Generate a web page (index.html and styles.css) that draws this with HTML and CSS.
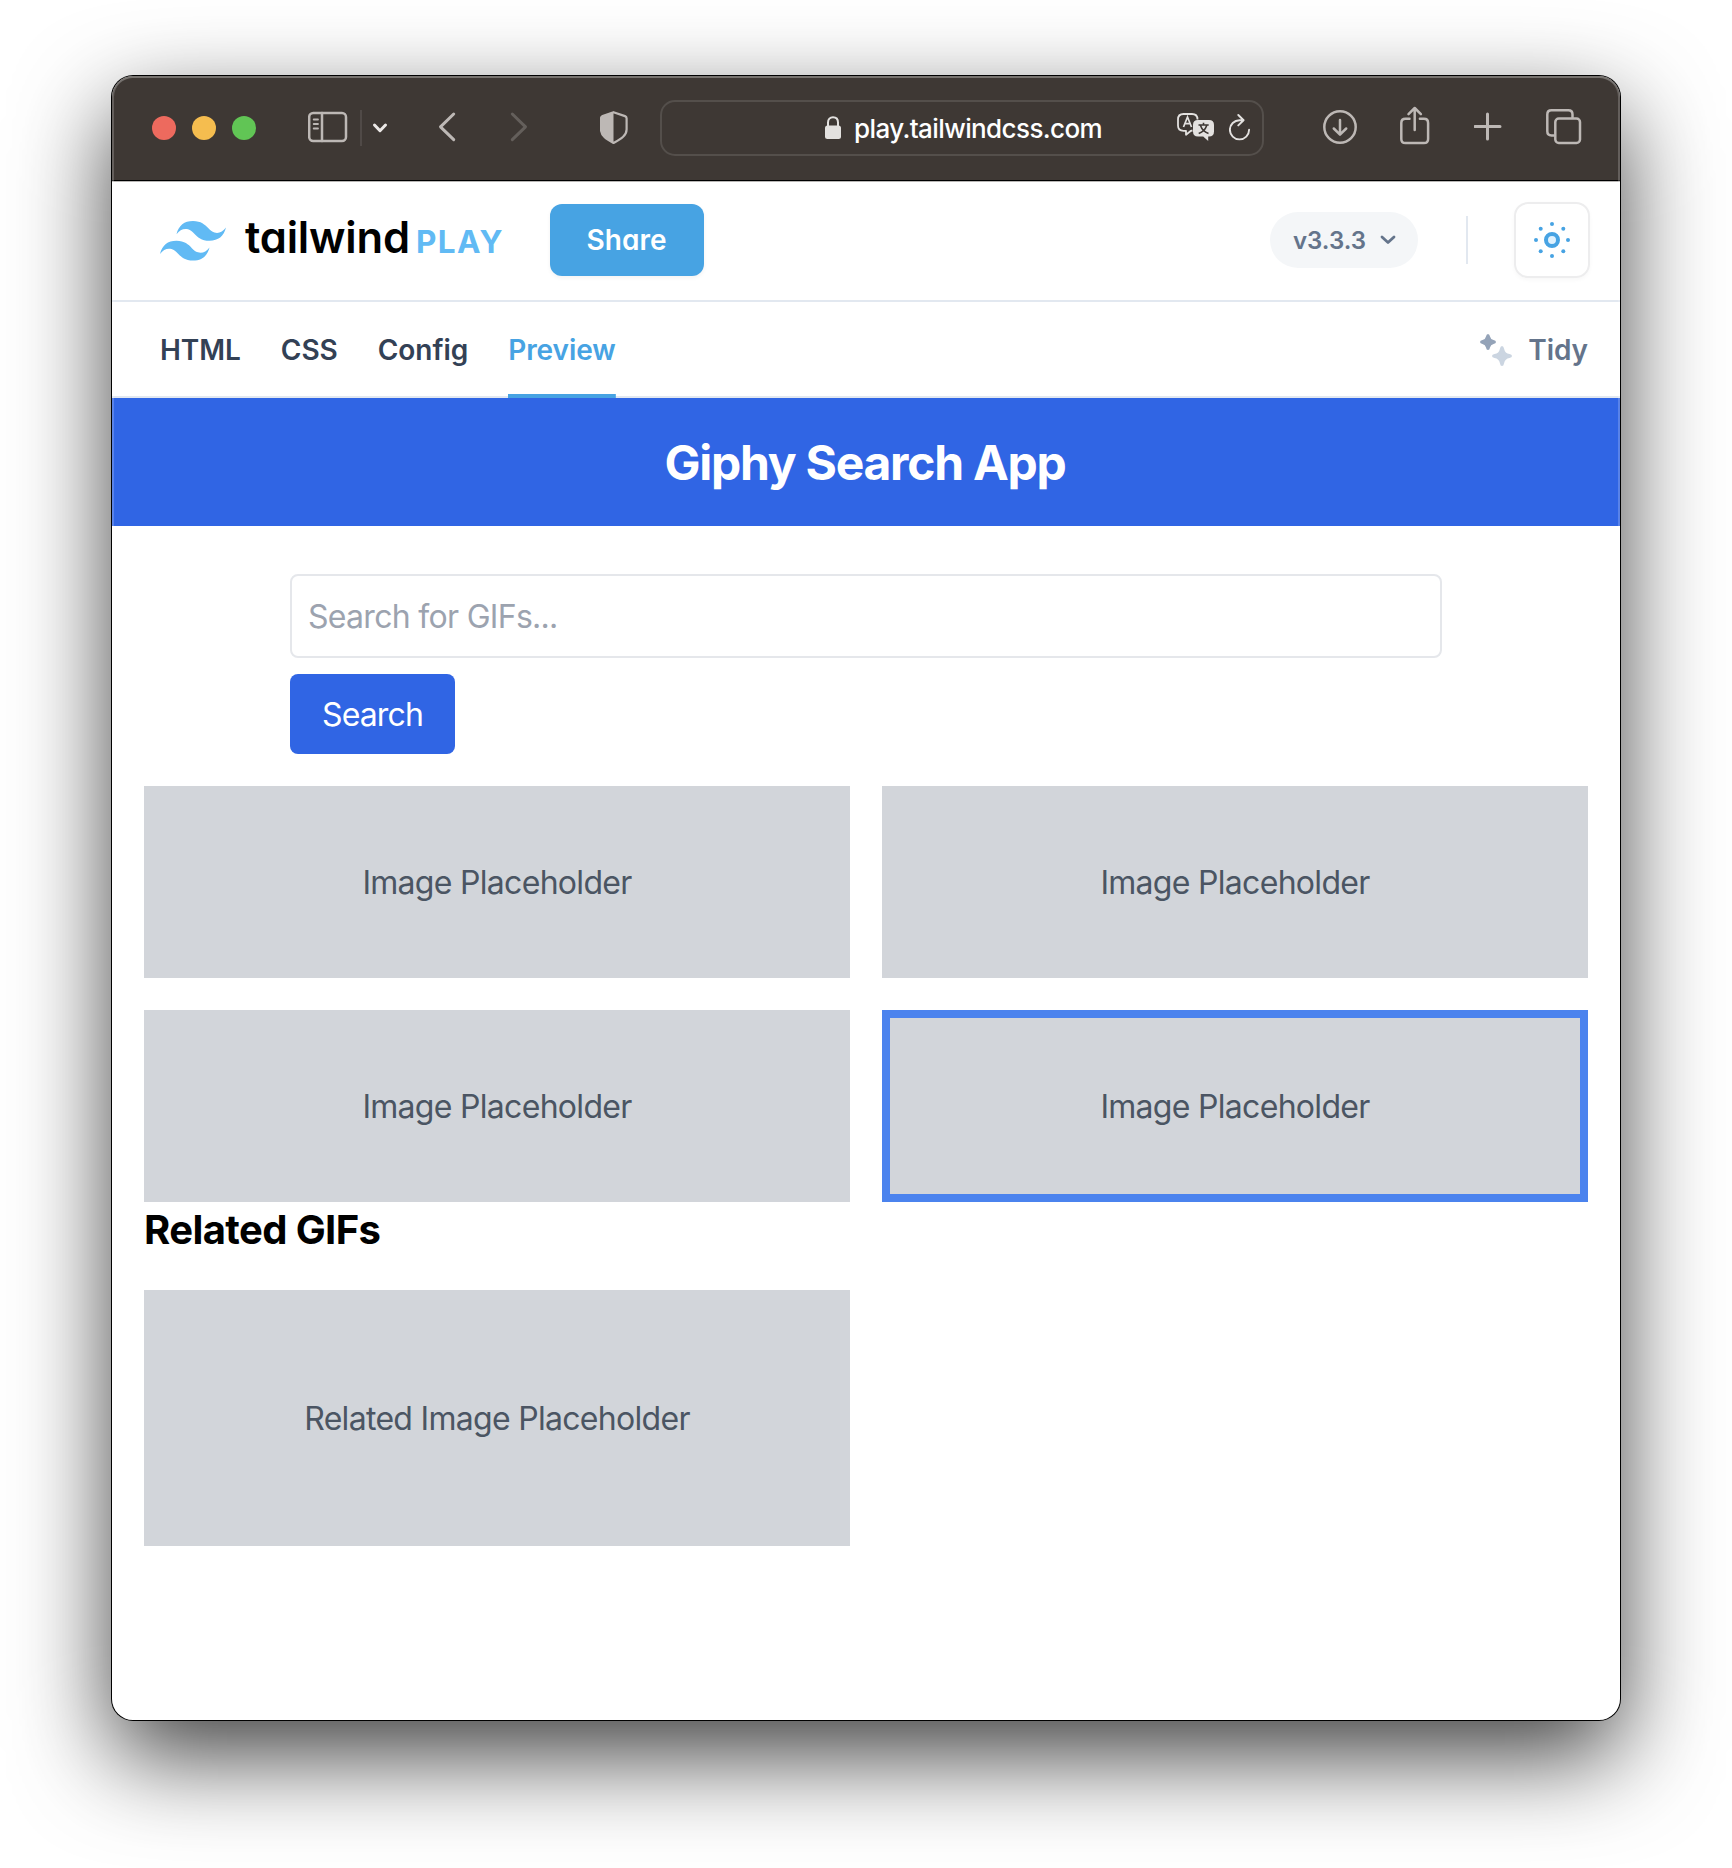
FILE: index.html
```html
<!DOCTYPE html>
<html lang="en">
<head>
<meta charset="utf-8">
<title>Tailwind Play</title>
<link rel="stylesheet" href="styles.css">
</head>
<body>
<div class="window">
  <div class="toolbar">
    <div class="lights"><i class="light red"></i><i class="light yellow"></i><i class="light green"></i></div>
    <svg class="ico sidebar" width="40" height="56" viewBox="308 100 40 56"><rect x="309.2" y="112.9" width="36.8" height="28.2" rx="4"/><path d="M322 113v28"/><path class="thin" d="M313.7 119.5h4.3M313.7 124h4.3M313.7 128.5h4.3"/></svg>
    <span class="split"></span>
    <svg class="ico bright menu" width="16" height="56" viewBox="372 100 16 56"><path d="M374.5 125l5.5 5.700 5.500-5.700"/></svg>
    <svg class="ico back" width="18" height="56" viewBox="438 100 18 56"><path d="M453.700 114l-13.200 12.800 13.200 12.800"/></svg>
    <svg class="ico forward" width="18" height="56" viewBox="510 100 18 56"><path d="M512.300 114l13.200 12.800-13.200 12.800"/></svg>
    <svg class="ico shield" width="28" height="56" viewBox="600 100 28 56"><path d="M613.500 112.200l11.500 3.900q1.600.6 1.600 2.200v11.200c0 6.500-6.500 9.800-13.100 13.500-6.500-3.700-12.500-7-12.500-13.500v-11.200q0-1.600 1.600-2.200z"/><path class="solid" d="M613.500 112.200v30.800c-6.500-3.700-12.500-7-12.500-13.500v-11.200q0-1.600 1.600-2.200z"/></svg>
    <div class="address">
      <svg class="lock" width="16" height="24" viewBox="0 0 16 24"><rect y="9.500" width="16" height="13.500" rx="2.500" fill="#e3e1df"/><path d="M3 10V6.500C3 3.200 5 1.200 8 1.200s5 2 5 5.300V10" fill="none" stroke="#e3e1df" stroke-width="2"/></svg>
      <span class="url">play.tailwindcss.com</span>
      <svg class="translate" width="38" height="28" viewBox="1177 112 38 28"><path d="M1192.500 129.500l-1.500.3-5 4v-4h-2.500q-5.500 0-5.500-5.300v-6q0-5.500 5.500-5.500h8.500q5.500 0 5.500 5.500" fill="none" stroke="#e3e1df" stroke-width="1.800" stroke-linejoin="round"/><path d="M1183.500 126l4-10 4 10M1185 122.700h5" fill="none" stroke="#e3e1df" stroke-width="1.700"/><path d="M1198 119h11q5 0 5 5v6.500q0 5-5 5h-.8v4.500l-5-4.500h-5.200q-5 0-5-5v-6.500q0-5 5-5z" fill="#e3e1df"/><path d="M1198.500 124h10.200M1203.500 121.800v2.200M1200.500 124.500c1.300 4 4 6.500 8 8M1206.700 124.500c-1.300 4-4 6.500-8 8" fill="none" stroke="#3e3834" stroke-width="1.600"/></svg>
      <svg class="reload" width="22" height="28" viewBox="1229 112 22 28"><path d="M1243.500 119.200h-4a9.600 9.600 0 1 0 9.600 9.600M1238.300 114l5.300 5.200-5.300 5.200" fill="none" stroke="#e3e1df" stroke-width="1.900" stroke-linecap="round" stroke-linejoin="round"/></svg>
    </div>
    <svg class="ico download" width="34" height="56" viewBox="1323 100 34 56"><circle cx="1340" cy="127" r="15.700"/><path d="M1340 120v14M1333.800 128.500l6.200 6.200 6.200-6.200"/></svg>
    <svg class="ico upload" width="30" height="56" viewBox="1400 100 30 56"><path d="M1409.500 118.700h-4q-4.200 0-4.200 4.200v16q0 4.200 4.200 4.200h18.400q4.200 0 4.200-4.200v-16q0-4.200-4.200-4.200h-4"/><path d="M1414.700 130V108.500M1408.500 114.200l6.200-6.200 6.200 6.200"/></svg>
    <svg class="ico plus" width="28" height="56" viewBox="1474 100 28 56"><path d="M1487.500 114v25M1475 126.500h25"/></svg>
    <svg class="ico tabs-ico" width="36" height="56" viewBox="1546 100 36 56"><rect x="1555.300" y="118.500" width="24.700" height="24.500" rx="3.500"/><path d="M1554 135.500h-2.500q-4.200 0-4.200-4.200v-16.800q0-4.200 4.200-4.200h16.800q4.200 0 4.200 4.200v3"/></svg>
  </div>

  <header class="top">
    <svg class="wave" width="66" height="40" viewBox="0 0 33 20"><path fill="#61baf4" d="M16.500 0C12.100 0 9.350 2.200 8.250 6.600 9.900 4.400 11.825 3.575 14.025 4.125c1.255.314 2.152 1.225 3.145 2.232C18.788 8 20.660 9.900 24.750 9.900c4.400 0 7.150-2.200 8.250-6.600-1.650 2.200-3.575 3.025-5.775 2.475-1.255-.314-2.152-1.224-3.145-2.232C22.462 1.900 20.590 0 16.500 0zM8.250 9.900C3.850 9.900 1.100 12.100 0 16.500c1.650-2.200 3.575-3.025 5.775-2.475 1.255.314 2.152 1.224 3.145 2.232C10.538 17.900 12.410 19.800 16.500 19.800c4.400 0 7.150-2.200 8.250-6.600-1.650 2.200-3.575 3.025-5.775 2.475-1.255-.314-2.152-1.225-3.145-2.232C14.212 11.800 12.340 9.900 8.250 9.900z"/></svg>
    <div class="brand"><span class="word">tailwind</span><span class="play">PLAY</span></div>
    <button class="share">Share</button>
    <div class="version"><span>v3.3.3</span><svg width="16" height="10" viewBox="0 0 16 10"><path d="M2 2l6 5.500L14 2" fill="none" stroke="#64748b" stroke-width="2.800" stroke-linecap="round" stroke-linejoin="round"/></svg></div>
    <span class="rule"></span>
    <div class="theme"><svg width="40" height="40" viewBox="-20 -20 40 40" fill="#47a3e3"><circle r="6" fill="#e0f2fe" stroke="#47a3e3" stroke-width="4"/><circle cy="-16" r="2"/><circle cy="16" r="2"/><circle cx="-16" r="2"/><circle cx="16" r="2"/><circle cx="-11.300" cy="-11.300" r="2"/><circle cx="11.300" cy="-11.300" r="2"/><circle cx="-11.300" cy="11.300" r="2"/><circle cx="11.300" cy="11.300" r="2"/></svg></div>
  </header>

  <nav class="tabs">
    <span class="tab html">HTML</span><span class="tab css">CSS</span><span class="tab config">Config</span><span class="tab active">Preview</span>
    <div class="tidy"><svg width="34" height="34" viewBox="0 0 34 34"><path fill="#94a3b8" d="M9 1q1.600 0 2 2.500.6 3 3.500 3.500 2.500.4 2.500 2t-2.500 2q-2.900.5-3.500 3.500-.4 2.500-2 2.500t-2-2.500q-.6-3-3.500-3.500-2.500-.4-2.500-2t2.500-2q2.900-.5 3.500-3.500.4-2.500 2-2.500z"/><path fill="#cbd5e1" d="M23 13q1.600 0 2 2.500 1 5 5.500 5.500 2.500.4 2.500 2t-2.500 2q-4.500.5-5.500 5.500-.4 2.500-2 2.500t-2-2.500q-1-5-5.500-5.500-2.500-.4-2.500-2t2.500-2q4.500-.5 5.500-5.500.4-2.500 2-2.500z"/></svg><span>Tidy</span></div>
  </nav>

  <main class="preview">
    <div class="banner"><h1>Giphy Search App</h1></div>
    <form class="search">
      <input type="text" placeholder="Search for GIFs...">
      <button type="button">Search</button>
    </form>
    <section class="grid">
      <div class="card">Image Placeholder</div>
      <div class="card">Image Placeholder</div>
      <div class="card">Image Placeholder</div>
      <div class="card selected">Image Placeholder</div>
    </section>
    <h2>Related GIFs</h2>
    <section class="grid">
      <div class="card tall">Related Image Placeholder</div>
    </section>
  </main>
</div>
</body>
</html>
```
FILE: styles.css
```css
* { box-sizing: border-box; }
body {
  margin: 0;
  height: 1868px;
  padding: 76px 112px 148px;
  overflow: hidden;
  background: #fff;
  font-family: Inter, "Liberation Sans", sans-serif;
}
svg { display: block; flex: none; }
button, input { font-family: inherit; border: 0; margin: 0; }

.window {
  position: relative;
  width: 1508px;
  height: 1644px;
  border-radius: 21px;
  overflow: hidden;
  background: #fff;
  box-shadow: 0 0 0 1px #000, 0 36px 96px rgba(0, 0, 0, .75);
}
.window::after {
  content: "";
  position: absolute;
  inset: 0;
  border-radius: inherit;
  pointer-events: none;
  box-shadow: inset 0 0 0 2px rgba(255, 255, 255, .2), inset 0 2px rgba(255, 255, 255, .12);
}

/* Browser toolbar */
.toolbar {
  display: flex;
  align-items: center;
  height: 106px;
  padding: 0 0 1px 40px;
  background: #3e3834;
  border-bottom: 1px solid #b9b7b5;
  box-shadow: inset 0 -1px #000;
}
.lights { display: flex; gap: 16px; }
.light { width: 24px; height: 24px; border-radius: 50%; }
.red { background: #ed6a5e; }
.yellow { background: #f5bd4f; }
.green { background: #61c555; }
.ico { fill: none; stroke: #bdb8b5; stroke-width: 2.5; stroke-linecap: round; stroke-linejoin: round; }
.ico .thin { stroke-width: 1.8; }
.ico .solid { fill: #bdb8b5; stroke: none; }
.sidebar { margin-left: 52px; }
.split { width: 2px; height: 36px; margin-left: 12px; background: #504a47; }
.menu { margin-left: 10px; }
.bright { stroke: #ebe8e6; stroke-width: 3; }
.back { margin-left: 50px; stroke-width: 3; }
.forward { margin-left: 54px; stroke: #645f5b; stroke-width: 3; }
.shield { margin-left: 72px; stroke-width: 2.2; }
.address {
  display: flex;
  align-items: center;
  width: 604px;
  height: 56px;
  margin-left: 32px;
  padding-left: 163px;
  border: 2px solid #544f4b;
  border-radius: 15px;
}
.url { width: 260px; margin-left: 13px; padding-top: 2px; color: #fff; font-size: 26px; font-weight: 500; line-height: 40px; letter-spacing: -.6px; }
.translate { margin: -2px 0 0 63px; }
.reload { margin: -2px 0 0 14px; }
.download { margin-left: 59px; }
.upload { margin-left: 43px; }
.plus { margin-left: 44px; stroke-width: 3; }
.tabs-ico { margin-left: 44px; }

/* Playground header */
.top, .tabs { font-feature-settings: "cv11"; font-weight: 600; }
.top {
  display: flex;
  align-items: center;
  height: 120px;
  padding: 0 30px 2px 48px;
  border-bottom: 2px solid #e2e8f0;
}
.wave { margin-top: 1px; }
.brand { display: flex; align-items: baseline; width: 261px; margin: -2px 0 0 19px; line-height: 56px; white-space: nowrap; }
.word { width: 171px; font-size: 43.5px; font-weight: 600; letter-spacing: -.2px; color: #000; }
.play { font-size: 31.5px; font-weight: 700; letter-spacing: 1.4px; color: #61baf4; }
.share {
  width: 154px;
  height: 72px;
  margin-left: 44px;
  padding: 0 1px 0 0;
  border-radius: 12px;
  background: #47a3e3;
  color: #fff;
  font-size: 28px;
  font-weight: 600;
  font-feature-settings: inherit;
  box-shadow: 0 2px 4px rgba(0, 0, 0, .05);
}
.version {
  display: flex;
  align-items: center;
  justify-content: space-between;
  width: 148px;
  height: 56px;
  margin-left: auto;
  padding: 0 22px 0 23px;
  border-radius: 28px;
  background: #f4f6f8;
  color: #64748b;
  font-size: 24px;
}
.rule { width: 2px; height: 48px; margin: 0 46px 0 48px; background: #e2e8f0; }
.theme {
  display: grid;
  place-items: center;
  width: 76px;
  height: 76px;
  border: 2px solid #ededee;
  border-radius: 14px;
  box-shadow: 0 2px 4px rgba(0, 0, 0, .03);
}

.tabs {
  display: flex;
  height: 96px;
  gap: 40px;
  padding: 0 32px 0 48px;
  color: #334155;
  font-size: 28px;
  line-height: 96px;
  letter-spacing: -.05px;
  box-shadow: inset 0 -2px #e2e8f0;
}
.active { color: #47a3e3; background: linear-gradient(#47a3e3, #47a3e3) bottom / 100% 4px no-repeat; }
.tidy { display: flex; align-items: center; gap: 15px; margin-left: auto; color: #64748b; }

/* Preview pane */
.banner { padding: 33px 32px 31px; background: #3065e4; color: #fff; text-align: center; }
h1 { margin: 0 2px 0 0; font-size: 48px; line-height: 64px; font-weight: 700; letter-spacing: -1.25px; }
.search { display: flex; flex-direction: column; align-items: flex-start; gap: 16px; width: 1152px; margin: 48px auto 32px; }
.search input {
  width: 100%;
  height: 84px;
  padding: 0 16px;
  border: 2px solid #e5e7eb;
  border-radius: 8px;
  background: #fff;
  font-size: 32px;
  letter-spacing: -.7px;
}
.search input::placeholder { color: #9ca3af; opacity: 1; }
.search button { width: 165px; height: 80px; border-radius: 8px; background: #3065e4; color: #fff; font-size: 32px; letter-spacing: -.85px; }
.grid { display: grid; grid-template-columns: 1fr 1fr; gap: 32px; padding: 0 32px; }
.card { display: flex; align-items: center; justify-content: center; height: 192px; background: #d2d5da; color: #4b5563; font-size: 32px; letter-spacing: -.7px; }
.selected { border: 8px solid #4b83ee; }
.tall { height: 256px; }
h2 { margin: 0 32px 32px; font-size: 40px; line-height: 56px; font-weight: 700; letter-spacing: -.6px; color: #000; }
```
